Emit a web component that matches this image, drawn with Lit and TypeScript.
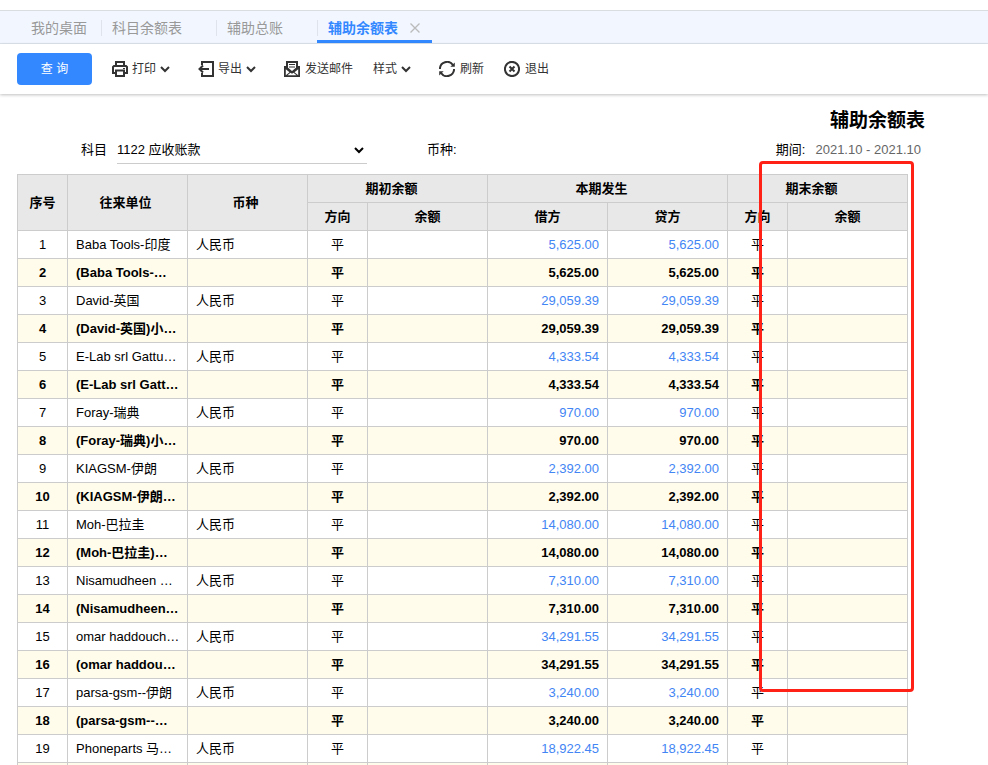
import { LitElement, html, css, svg } from "lit";
import { customElement, state } from "lit/decorators.js";
import { classMap } from "lit/directives/class-map.js";

interface Row {
  name: string;
  amount: string;
  subtotal?: boolean;
}

const pair = (name: string, subtotal: string, amount: string): Row[] => [
  { name, amount },
  { name: subtotal, amount, subtotal: true },
];

const ROWS: Row[] = [
  ...pair("Baba Tools-印度", "(Baba Tools-…", "5,625.00"),
  ...pair("David-英国", "(David-英国)小…", "29,059.39"),
  ...pair("E-Lab srl Gattu…", "(E-Lab srl Gatt…", "4,333.54"),
  ...pair("Foray-瑞典", "(Foray-瑞典)小…", "970.00"),
  ...pair("KIAGSM-伊朗", "(KIAGSM-伊朗…", "2,392.00"),
  ...pair("Moh-巴拉圭", "(Moh-巴拉圭)…", "14,080.00"),
  ...pair("Nisamudheen …", "(Nisamudheen…", "7,310.00"),
  ...pair("omar haddouch…", "(omar haddou…", "34,291.55"),
  ...pair("parsa-gsm--伊朗", "(parsa-gsm--…", "3,240.00"),
  { name: "Phoneparts 马…", amount: "18,922.45" },
];

const TABS = [
  { label: "我的桌面", closable: false },
  { label: "科目余额表", closable: true },
  { label: "辅助总账", closable: true },
  { label: "辅助余额表", closable: true },
];

const icon = (body: unknown) => html`
  <svg class="icon" viewBox="0 0 16 16" aria-hidden="true">${body}</svg>
`;

const printIcon = icon(svg`
  <path d="M4 5V1h8v4" />
  <path d="M4 12H1V6l1-1h12l1 1v6h-3" />
  <path d="M4 9.500h8V15H4z" />
  <path d="M11 7.500h2" stroke-width="1" />
`);
const exportIcon = icon(svg`
  <path d="M4 4V1h11v14H4v-3" />
  <path d="M11 8H1.500M5 4.500 1.500 8 5 11.500" />
`);
const mailIcon = icon(svg`
  <path d="M3 7V1h10v6" />
  <path d="M5 3.500h6M5 6h6" stroke-width="1.200" />
  <path d="M0 5h2l6 5 6-5h2v11H0z" fill="currentColor" stroke="none" />
  <path d="M1.800 8.200l3.700 3-3.700 3M14.200 8.200l-3.700 3 3.700 3M3.500 14.200l3-2.400 1.500 1 1.500-1 3 2.400z"
    fill="#fff" stroke="none" />
`);
const refreshIcon = icon(svg`
  <path d="M0.900 8A7.200 7.200 0 0 1 14 4M15.100 8A7.200 7.200 0 0 1 2 12" />
  <path d="M15.800 1.500v4.300h-4.500zM0.200 14.500v-4.300h4.500z" fill="currentColor" stroke="none" />
`);
const exitIcon = icon(svg`
  <circle cx="8" cy="8" r="7.100" />
  <path d="M5.500 5.500l5 5M10.500 5.500l-5 5" />
`);
const chevron = html`
  <svg class="chevron" viewBox="0 0 10 8" aria-hidden="true"><path d="M1 2l4 4 4-4" /></svg>
`;

@customElement("app-root")
export class AppRoot extends LitElement {
  @state() private active = 3;

  static styles = css`
    :host {
      display: flex;
      flex-direction: column;
      height: 100vh;
      overflow: hidden;
      box-sizing: border-box;
      padding-top: 10px;
      background: #fff;
      color: #000;
      font-family: "Liberation Sans", "Noto Sans CJK SC", sans-serif;
      font-size: 13px;
      line-height: 20px;
    }
    button,
    select {
      font: inherit;
      color: inherit;
      background: none;
      border: 0;
      padding: 0;
      margin: 0;
      cursor: pointer;
    }
    svg {
      flex: none;
      fill: none;
      stroke: currentColor;
    }
    .tabs {
      display: flex;
      flex: none;
      height: 32px;
      padding-left: 20px;
      background: #f2f7ff;
      border-top: 1px solid #dadde0;
      border-bottom: 1px solid #e0e6ee;
    }
    .tab {
      display: flex;
      align-items: center;
      box-sizing: border-box;
      border-bottom: 3px solid transparent;
      padding-top: 5px;
      color: #999;
      font-size: 14px;
    }
    .tab::before {
      content: "";
      width: 1px;
      height: 16px;
      margin-right: 10px;
      background: #dfe4ec;
    }
    .tab:first-child::before {
      background: none;
    }
    .tab.active {
      color: #3388ff;
      border-bottom-color: #3388ff;
      font-weight: bold;
    }
    .slot {
      display: flex;
      justify-content: center;
      width: 34px;
    }
    .slot.narrow {
      width: 14px;
    }
    .close {
      display: flex;
      color: #bbb;
    }
    .close svg {
      width: 10px;
      height: 10px;
      stroke-width: 1.4;
    }
    .toolbar {
      display: flex;
      align-items: center;
      flex: none;
      gap: 20px;
      height: 50px;
      padding-left: 17px;
      color: #333;
      font-size: 12px;
      box-shadow: 0 1px 3px rgba(0, 0, 0, 0.25);
    }
    .query {
      width: 75px;
      height: 32px;
      border-radius: 4px;
      background: #3388ff;
      color: #fff;
    }
    .tool {
      display: flex;
      align-items: center;
      gap: 5px;
    }
    .tool.menu {
      gap: 4px;
      padding-right: 8px;
    }
    .icon {
      width: 16px;
      height: 16px;
      stroke-width: 2;
    }
    .chevron {
      width: 10px;
      height: 8px;
      stroke-width: 2;
    }
    .report {
      flex: 1;
      min-height: 0;
      padding: 13px 80px 0 17px;
    }
    h1 {
      margin: 0 -17px 0 0;
      text-align: right;
      font-size: 19px;
      line-height: 28px;
    }
    .filters {
      display: flex;
      align-items: center;
      height: 30px;
      margin: 0 -13px 9px 64px;
    }
    .account {
      display: flex;
      align-items: center;
      gap: 10px;
      margin-right: 60px;
    }
    .picker {
      display: flex;
      align-items: center;
      width: 250px;
      height: 28px;
      box-sizing: border-box;
      border-bottom: 1px solid #ccc;
    }
    .picker select {
      flex: 1;
      height: 28px;
      margin-right: -13px;
      appearance: none;
      outline: none;
    }
    .picker svg {
      margin-right: 3px;
      pointer-events: none;
    }
    .period {
      display: flex;
      gap: 10px;
      margin-left: auto;
    }
    .range {
      color: #666;
    }
    .sheet {
      position: relative;
    }
    table {
      width: 100%;
      table-layout: fixed;
      border-collapse: collapse;
    }
    .c-no {
      width: 50px;
    }
    .c-dir {
      width: 60px;
    }
    .c-wide {
      width: 120px;
    }
    th,
    td {
      box-sizing: border-box;
      height: 28px;
      padding: 0 8px;
      border: 1px solid #ccc;
      overflow: hidden;
      white-space: nowrap;
      text-align: left;
    }
    th {
      background: #e8e8e8;
      text-align: center;
    }
    th.tall {
      padding-right: 12px;
    }
    th.group {
      padding-right: 20px;
    }
    .mid {
      text-align: center;
    }
    .num {
      text-align: right;
      color: #4285f4;
    }
    .subtotal {
      background: #fffceb;
      font-weight: bold;
    }
    .subtotal .num {
      color: #000;
    }
    .marker {
      position: absolute;
      top: -13px;
      right: -6px;
      width: 155px;
      height: 531px;
      box-sizing: border-box;
      border: 3px solid #ff2116;
      border-radius: 4px;
      pointer-events: none;
    }
  `;

  private renderTab(tab: (typeof TABS)[number], i: number) {
    const active = i === this.active;
    return html`
      <div class=${classMap({ tab: true, active })}>
        <button @click=${() => (this.active = i)}>${tab.label}</button>
        <span class=${classMap({ slot: true, narrow: !tab.closable })}>
          ${active && tab.closable
            ? html`<button class="close" aria-label="关闭">
                <svg viewBox="0 0 10 10"><path d="M0.500 0.500l9 9M9.500 0.500l-9 9" /></svg>
              </button>`
            : null}
        </span>
      </div>
    `;
  }

  private renderRow(row: Row, i: number) {
    return html`
      <tr class=${classMap({ subtotal: !!row.subtotal })}>
        <td class="mid">${i + 1}</td>
        <td>${row.name}</td>
        <td>${row.subtotal ? "" : "人民币"}</td>
        <td class="mid">平</td>
        <td></td>
        <td class="num">${row.amount}</td>
        <td class="num">${row.amount}</td>
        <td class="mid">平</td>
        <td></td>
      </tr>
    `;
  }

  render() {
    return html`
      <nav class="tabs">${TABS.map((t, i) => this.renderTab(t, i))}</nav>
      <div class="toolbar">
        <button class="query">查 询</button>
        <button class="tool menu">${printIcon}<span>打印</span>${chevron}</button>
        <button class="tool menu">${exportIcon}<span>导出</span>${chevron}</button>
        <button class="tool">${mailIcon}<span>发送邮件</span></button>
        <button class="tool menu"><span>样式</span>${chevron}</button>
        <button class="tool">${refreshIcon}<span>刷新</span></button>
        <button class="tool">${exitIcon}<span>退出</span></button>
      </div>
      <main class="report">
        <h1>辅助余额表</h1>
        <div class="filters">
          <div class="account">
            <label for="account">科目</label>
            <div class="picker">
              <select id="account">
                <option>1122 应收账款</option>
              </select>
              ${chevron}
            </div>
          </div>
          <span>币种:</span>
          <div class="period"><span>期间:</span><span class="range">2021.10 - 2021.10</span></div>
        </div>
        <div class="sheet">
          <table>
            <colgroup>
              <col class="c-no" />
              <col class="c-wide" />
              <col class="c-wide" />
              <col class="c-dir" />
              <col class="c-wide" />
              <col class="c-wide" />
              <col class="c-wide" />
              <col class="c-dir" />
              <col class="c-wide" />
            </colgroup>
            <thead>
              <tr>
                <th rowspan="2">序号</th>
                <th class="tall" rowspan="2">往来单位</th>
                <th class="tall" rowspan="2">币种</th>
                <th class="group" colspan="2">期初余额</th>
                <th class="group" colspan="2">本期发生</th>
                <th class="group" colspan="2">期末余额</th>
              </tr>
              <tr>
                <th>方向</th>
                <th>余额</th>
                <th>借方</th>
                <th>贷方</th>
                <th>方向</th>
                <th>余额</th>
              </tr>
            </thead>
            <tbody>
              ${ROWS.map((r, i) => this.renderRow(r, i))}
            </tbody>
            <tfoot>
              <tr class="subtotal">
                ${Array.from({ length: 9 }, () => html`<td></td>`)}
              </tr>
            </tfoot>
          </table>
          <div class="marker"></div>
        </div>
      </main>
    `;
  }
}
